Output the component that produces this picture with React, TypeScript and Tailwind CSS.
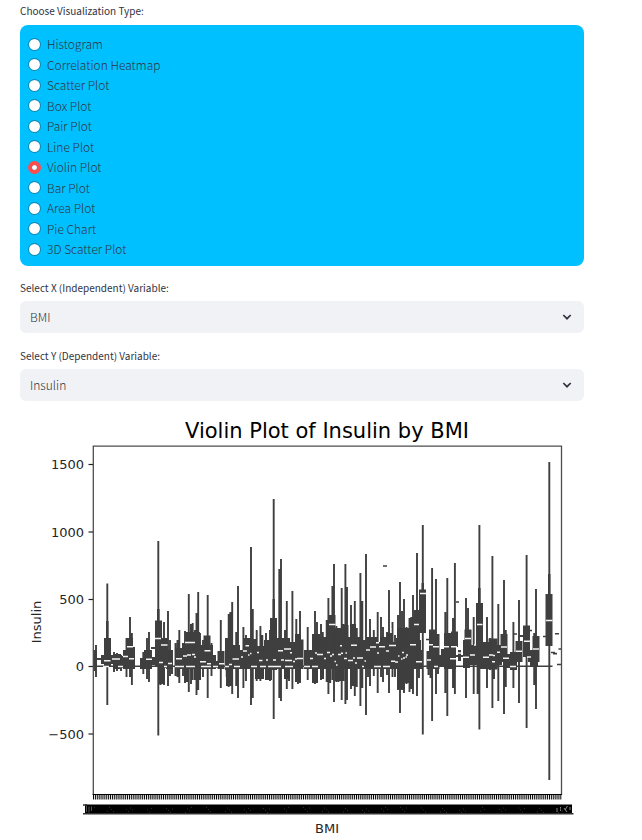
import { useState } from "react";

const chartTypes = [
  "Histogram",
  "Correlation Heatmap",
  "Scatter Plot",
  "Box Plot",
  "Pair Plot",
  "Line Plot",
  "Violin Plot",
  "Bar Plot",
  "Area Plot",
  "Pie Chart",
  "3D Scatter Plot",
];

const columns = ["BMI", "Insulin", "Glucose", "Age", "Outcome"];

// Density tails of each violin: x, top, bottom.
const tails: number[][] = [
  [94.5, 650, 671], [96, 645, 677], [107.3, 583.5, 705], [114, 652, 672], [117, 653, 671], [121, 655, 671], [126.5, 638, 677],
  [130, 617, 677], [131.9, 633, 685], [143.3, 652, 674], [147, 638, 679], [149, 632, 682], [158.3, 541, 735.5],
  [160.5, 640, 685], [164, 622, 685], [168, 611, 686], [170, 640, 676], [172, 652, 674], [175.5, 643, 676], [177.5, 640, 677],
  [179.3, 630, 683], [183, 650, 676], [185, 631, 683], [188.8, 594, 692], [191, 624, 684], [192.7, 623, 680], [195, 630, 680],
  [196.5, 613, 695], [198.2, 592, 690], [200, 633, 680], [203, 640, 677], [207.7, 595, 698], [211.5, 643, 676],
  [220.8, 620, 688], [226.7, 638, 677], [228.7, 614, 687], [230.3, 612, 686], [232.2, 602, 694], [236.2, 632, 686],
  [238, 586, 698], [243.4, 627, 688], [246, 635, 681], [251, 547, 705], [252.8, 609, 698], [256.7, 630, 681],
  [260.4, 626, 681], [262.3, 635, 679], [266, 633, 678], [270, 630, 681], [273.7, 499, 719], [279.3, 569, 698],
  [281, 559, 701], [285, 630, 677], [286.8, 601, 689], [289, 640, 681], [292.4, 591, 689], [296.3, 619, 680],
  [298, 634, 684], [300, 611, 683], [307.7, 627, 680], [313.2, 634, 681], [315, 611, 684], [317, 622, 683],
  [321, 624, 680], [322.8, 632, 679], [326.7, 620, 682], [328.4, 598, 694], [330.2, 615, 683], [332.4, 586, 680],
  [334, 564, 702], [336.4, 626, 682], [338.5, 628, 682], [341.7, 588, 700], [343.4, 624, 681], [345.4, 564, 704],
  [347, 587, 700], [351, 605, 689], [353, 624, 684], [354.8, 601, 696], [356.8, 628, 687], [360.4, 573, 706],
  [362.3, 601, 688], [366, 554, 715], [368, 637, 677], [370, 619, 686], [373.8, 630, 676], [377.7, 612, 693],
  [381, 617, 677], [383, 627, 682], [387, 632, 675], [389, 590, 693], [392.5, 622, 677], [395, 635, 677],
  [398, 615, 690], [400, 582, 713], [402, 611, 690], [404, 599, 693], [406.5, 627, 684], [409.5, 618, 692],
  [411.3, 617, 689], [413, 595, 694], [417, 553, 696], [419, 630, 678], [422.8, 525, 734.5], [428.5, 655, 675],
  [430.5, 645, 678], [432.1, 568, 721], [436, 579, 694], [438, 640, 674], [445.3, 612, 693], [447.3, 578, 716],
  [453, 618, 688], [454.9, 563, 694], [466, 598, 698], [468, 608, 668], [473.7, 617, 694], [477.6, 640, 694],
  [479.4, 525, 729.5], [487, 617, 688], [490, 638, 670], [492.4, 556, 708], [494, 650, 679], [498.3, 604, 701],
  [504, 580, 714], [505.8, 630, 687], [513.4, 622, 688], [519, 600, 703], [526.6, 555, 728], [534.2, 633, 685],
  [536, 589, 709], [549.3, 462, 780],
];

// Violin bodies and quartile boxes: left, top, right, bottom.
const bodies: number[][] = [
  [93, 650, 97, 667], [97, 658, 104, 660], [101, 655, 111, 664], [104, 638, 111, 667], [111, 655, 116, 664], [113, 654, 121, 669], [119, 656, 125, 668],
  [123, 650, 134, 669], [126, 638, 133, 669], [130, 647, 135, 669], [140, 658, 145, 669], [144, 650, 152, 669],
  [151, 647, 157, 649], [152, 657, 157, 665], [155, 620.5, 162, 667], [161, 638, 168, 668], [166, 650, 173, 669], [175, 648, 184, 669], [182, 643, 187, 669],
  [185, 632, 200, 669], [190, 624, 193, 669], [198, 645, 213, 669], [203.5, 635.5, 210.5, 668], [211, 655, 216, 669], [216, 661, 218, 668],
  [217.5, 651, 224.5, 669], [225, 638, 232, 670], [232, 645, 240, 669], [240, 650, 245, 669], [243, 638, 252, 669],
  [248, 639, 257, 669], [255, 646, 265, 669], [264, 640, 272, 669], [270, 618, 277, 670], [274, 638, 290, 669],
  [288, 642, 296, 669], [295, 634, 301, 669], [299, 639.5, 303.5, 669], [304, 650, 313, 669], [312, 634, 320, 669],
  [319, 637, 328, 669], [325, 640, 336, 669], [328.5, 615, 335.5, 669], [335, 628, 346, 669], [342, 625, 348.5, 669],
  [348, 637, 360, 669], [350, 624, 356, 669], [359, 640, 368, 669], [366, 637, 378, 669], [372, 642, 386, 669],
  [380, 637, 393, 669], [387, 633, 392, 669], [392, 642, 400, 669], [396, 638, 402, 669], [397, 628, 405, 689],
  [404, 628, 409, 683], [406, 640, 421, 669], [412, 617, 417, 669], [414, 610, 419, 650], [419, 589.5, 426, 633], [417, 650, 422, 669],
  [426.5, 651, 433, 669], [429, 629.5, 436, 669], [433, 634, 439.5, 669], [439, 655, 445, 667], [441, 649, 447, 662],
  [444, 633, 451, 669], [449, 647, 456, 669], [451, 631.5, 458, 647], [456, 655, 463, 657], [458, 650, 461, 661],
  [463, 640, 470, 668], [464.5, 629.5, 471.5, 660], [470, 645, 477, 665], [476, 603, 483, 664], [480, 649, 484, 669],
  [483, 642, 490, 669], [488.5, 638.5, 497.5, 669.5], [496, 645, 502, 665], [500.5, 634, 507.5, 662], [503, 654, 511, 668],
  [510, 652, 517, 670], [515.5, 641, 522.5, 662], [519, 635, 524, 637], [523, 625.5, 530, 657], [528, 650, 534, 662], [532.5, 636, 539.5, 662],
  [530, 658, 538, 666], [545.5, 594, 552.5, 646], [548, 574, 550.5, 600], [157, 609, 159.6, 622], [272.5, 599, 275, 620],
  [106, 621, 108.6, 640], [478, 588, 480.6, 604], [421.5, 583, 424, 590],
  [159, 650, 165, 684], [184, 650, 189, 682], [194, 650, 201, 680], [226, 650, 233, 686], [255, 650, 264, 679],
  [265, 650, 272, 680], [284, 650, 290, 679], [295, 650, 301, 682], [312, 650, 318, 683], [320, 650, 324, 679],
  [326, 650, 331, 681], [335, 650, 342, 681], [350, 650, 357, 686],
  [93, 665.5, 552.5, 667],
];

// Isolated flat violins.
const dashes: number[][] = [
  [383, 566, 387], [456, 602, 459], [426, 639.5, 430], [513, 634, 517], [529, 630.5, 532], [543, 636.5, 546],
  [555, 633.8, 559], [551, 652.5, 555], [553, 653.6, 557], [558.5, 649, 561], [557, 664.5, 561],
];

// Median marks: x1, y, x2.
const medians: number[][] = [
  [104, 660.7, 110.5], [103, 666.5, 109], [112, 659, 120], [118, 666.5, 123], [123, 656.5, 128], [127, 646.7, 133],
  [129, 658.7, 134], [146, 659.3, 152], [155, 638.5, 161], [161, 645, 167.5], [159, 662.5, 163], [164, 666.5, 167],
  [168, 663.5, 172], [176, 658.7, 182], [183, 656, 187], [187, 655, 191], [185, 642.5, 195], [192, 654.5, 195],
  [194, 657, 196], [200, 661.7, 206], [207, 663.7, 211], [204.5, 650.7, 210.5], [175, 666.5, 184], [186, 666.5, 195],
  [201, 666.5, 211], [213, 666.5, 218], [219, 663.7, 224.5], [225, 666.5, 229], [229, 664.5, 232], [232.5, 659, 239],
  [243, 651, 247], [234, 666.5, 240], [245.5, 645.7, 249], [241, 657, 243], [248, 655, 249.5], [250, 653.5, 251.5],
  [257, 652.5, 259], [251, 666.5, 257], [259, 660.5, 262.5], [260, 666.5, 266], [268, 666.5, 281], [266, 660, 268],
  [273, 660, 276], [278, 650.7, 283], [284, 649, 291], [285, 660.5, 292], [281, 660, 284], [290, 652.7, 292],
  [285, 666.5, 293], [293, 661.5, 295], [295, 659, 297], [297, 658.5, 303], [304, 666.5, 310], [312, 666.5, 318],
  [310, 658.5, 313], [315, 653, 317], [317, 654.5, 323], [324, 658.5, 326], [327, 652.5, 330], [329, 624.5, 335.5],
  [330, 656, 332], [332, 654.5, 334], [334.5, 661.5, 336], [336, 665, 337.5], [338, 654.5, 341], [341, 653.2, 343],
  [340, 645.7, 342], [345.5, 653, 347], [344, 658.5, 347], [348, 660.5, 353], [351, 645.3, 357], [353, 658, 355],
  [355, 663, 357], [357, 658, 359], [359, 658, 363], [362, 666.5, 364], [364.5, 661, 366], [366, 650, 370],
  [370, 647, 376], [376, 642.7, 379], [379, 646.7, 385], [377, 653, 379], [374, 666.5, 381], [383, 666.5, 390],
  [386, 651, 389], [389, 645.5, 396], [391, 661.3, 395], [395, 662, 398], [390, 629, 391.5], [390, 632, 391.5],
  [398, 656, 399.5], [402, 652.5, 404], [403, 658, 405], [405.5, 657, 407], [406, 655, 408], [410, 644.7, 416],
  [401, 659, 402.5], [414, 624.5, 419], [416, 661.7, 422], [420, 593.5, 426], [429, 644.7, 433], [433, 646.7, 439],
  [427, 660, 431], [434, 666.5, 438], [444, 646.7, 449], [450, 658.7, 456], [451, 646.7, 457], [457, 653, 461],
  [463, 657.3, 469], [465, 638.5, 471], [470, 655, 475], [474, 645, 476], [477, 624.5, 482.5], [483, 657.3, 489],
  [489, 655, 493], [492, 661.7, 495], [493, 655.5, 495], [497, 652.3, 500], [501, 647, 507], [503, 658.3, 509],
  [510, 666.5, 516], [516, 651.3, 522], [524, 641.3, 530], [527, 657, 531], [533, 649, 539], [546, 620.5, 552.5],
];

const axisFont = "fill-[#262626] font-['DejaVu_Sans',sans-serif] text-[13px]";

const yTicks = [
  { label: "1500", y: 464 },
  { label: "1000", y: 531.5 },
  { label: "500", y: 599 },
  { label: "0", y: 666 },
  { label: "−500", y: 733.5 },
];

const xTicks = Array.from({ length: 248 }, (_, i) => 93.5 + i * 1.892);

const specks = Array.from({ length: 90 }, (_, i) => ({
  x: 94 + ((i * 137) % 470),
  y: 807 + ((i * 31) % 11) / 2,
}));

function ViolinChart() {
  return (
    <svg viewBox="20 411 564 429" className="block w-full" role="img" aria-label="Violin Plot of Insulin by BMI">
      <text x="327" y="438" textAnchor="middle" className="fill-black font-['DejaVu_Sans',sans-serif] text-[21px]">
        Violin Plot of Insulin by BMI
      </text>
      <g fill="#3f3f3f">
        {bodies.map(([x1, y1, x2, y2], i) => (
          <rect key={i} x={x1} y={y1} width={x2 - x1} height={y2 - y1} />
        ))}
      </g>
      <path
        d={tails.map(([x, top, bottom]) => `M${x} ${top}V${bottom}`).join("")}
        stroke="#3f3f3f"
        strokeWidth="1.9"
      />
      <path d={dashes.map(([a, y, b]) => `M${a} ${y}H${b}`).join("")} stroke="#3f3f3f" strokeWidth="1.6" />
      <path d={medians.map(([a, y, b]) => `M${a} ${y}H${b}`).join("")} stroke="#f4f4f4" strokeWidth="1.4" />
      <path d="M93.3 795V446.2H561.5V795" fill="none" stroke="#4d4d4d" strokeWidth="1.3" />
      <path d="M92.7 794.5H562" stroke="#000" strokeWidth="1.2" />
      <path d={xTicks.map((x) => `M${x} 795V799.5`).join("")} stroke="#000" strokeWidth="1" />
      {yTicks.map(({ label, y }) => (
        <g key={label}>
          <path d={`M88.5 ${y + 0.5}H93`} stroke="#222" strokeWidth="1.2" />
          <text x="84" y={y + 5} textAnchor="end" className={axisFont}>
            {label}
          </text>
        </g>
      ))}
      <rect x="85" y="804.5" width="487" height="9.5" fill="#000" />
      <path d="M83 805H87M83 813.8H573.5" stroke="#333" strokeWidth="1.4" />
      <path d="M86.5 806V812M89 806.5V812.5M91.5 806.5V811" stroke="#777" strokeWidth="0.7" />
      <path d="M557 808V812M560.5 807V811M564 808L567 812M567.5 806L565 810M570 807V810" stroke="#aaa" strokeWidth="0.8" />
      {specks.map(({ x, y }, i) => (
        <rect key={i} x={x} y={y} width="1" height="1" fill="#2c2c2c" />
      ))}
      <text x="327" y="833" textAnchor="middle" className={axisFont}>
        BMI
      </text>
      <text transform="translate(41 622) rotate(-90)" textAnchor="middle" className={axisFont}>
        Insulin
      </text>
    </svg>
  );
}

type SelectFieldProps = {
  id: string;
  label: string;
  value: string;
  onChange: (value: string) => void;
};

function SelectField({ id, label, value, onChange }: SelectFieldProps) {
  return (
    <div className="flex flex-col gap-[5px]">
      <label htmlFor={id} className="text-[10px] leading-4">
        {label}
      </label>
      <div className="relative">
        <select
          id={id}
          value={value}
          onChange={(e) => onChange(e.target.value)}
          className="block h-8 w-full appearance-none rounded-md bg-[#f0f2f6] px-[10px] text-[12px] leading-5 font-light"
        >
          {columns.map((c) => (
            <option key={c}>{c}</option>
          ))}
        </select>
        <svg
          viewBox="0 0 10 6"
          className="pointer-events-none absolute top-[13px] right-3 h-[6px] w-[10px]"
          fill="none"
          stroke="#31333f"
          strokeWidth="1.7"
        >
          <path d="M1.3 1L5 4.7L8.7 1" />
        </svg>
      </div>
    </div>
  );
}

export default function App() {
  const [chart, setChart] = useState("Violin Plot");
  const [xVar, setXVar] = useState("BMI");
  const [yVar, setYVar] = useState("Insulin");

  return (
    <main className="bg-white pt-[3px] pr-[58px] pl-5 font-['Noto_Sans_CJK_SC',sans-serif] text-[#31333f]">
      <fieldset>
        <legend className="mb-[6px] text-[10px] leading-4">Choose Visualization Type:</legend>
        <div className="flex h-[241px] flex-col justify-between rounded-lg bg-[#00c0ff] px-2 pt-[9px] pb-[7px]">
          {chartTypes.map((name) => (
            <label key={name} className="flex h-5 items-center gap-[6px] text-[12px] leading-5 font-light">
              <input
                type="radio"
                name="chart-type"
                value={name}
                checked={chart === name}
                onChange={() => setChart(name)}
                className="size-[13px] appearance-none rounded-full border border-[#31333f]/40 bg-white bg-clip-padding checked:border-4 checked:border-[#ff4b4b]"
              />
              {name}
            </label>
          ))}
        </div>
      </fieldset>
      <div className="mt-[14px] mb-[10px] flex flex-col gap-[15px]">
        <SelectField id="x-variable" label="Select X (Independent) Variable:" value={xVar} onChange={setXVar} />
        <SelectField id="y-variable" label="Select Y (Dependent) Variable:" value={yVar} onChange={setYVar} />
      </div>
      <ViolinChart />
    </main>
  );
}
